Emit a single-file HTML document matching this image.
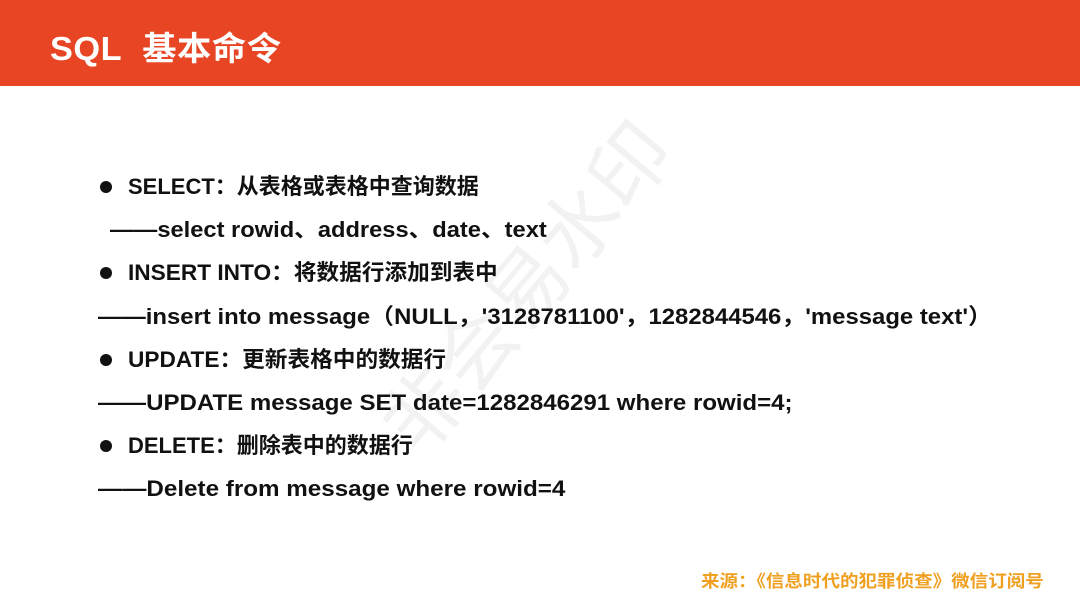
<!DOCTYPE html>
<html><head><meta charset="utf-8"><style>
body{margin:0;width:1080px;height:608px;background:#fff;position:relative;overflow:hidden;font-family:"Liberation Sans","Noto Sans CJK SC",sans-serif}
.hd{position:absolute;left:0;top:0;width:1080px;height:86px;background:#e84524}
.hd span{position:absolute;left:50px;top:22px;color:#fff;font-size:33px;font-weight:bold;letter-spacing:0.5px;transform:scaleX(1.04);transform-origin:left}
.l{position:absolute;font-size:22px;font-weight:bold;color:#111;white-space:nowrap;line-height:30px;transform-origin:left center}
.b{position:absolute;left:100px;width:12px;height:12px;border-radius:50%;background:#111}
.src{position:absolute;left:701px;top:567px;color:#f0a020;font-size:17px;font-weight:bold;white-space:nowrap;transform:scaleX(1.09);transform-origin:left}
.wm{position:absolute;left:350px;top:400px;font-size:80px;color:rgba(0,0,0,0.05);transform:rotate(-50deg);transform-origin:left top;white-space:nowrap}
</style></head><body>
<div class="hd"><span>SQL&nbsp; 基本命令</span></div>
<div class="wm">非会易水印</div>
<div class="b" style="top:181px"></div><div class="l" style="left:128px;top:172px">SELECT：从表格或表格中查询数据</div>
<div class="l" style="left:110px;top:215px;transform:scaleX(1.076)">——select rowid、address、date、text</div>
<div class="b" style="top:267px"></div><div class="l" style="left:128px;top:258px;transform:scaleX(1.03)">INSERT INTO：将数据行添加到表中</div>
<div class="l" style="left:98px;top:302px;transform:scaleX(1.086)">——insert into message（NULL，'3128781100'，1282844546，'message text'）</div>
<div class="b" style="top:354px"></div><div class="l" style="left:128px;top:345px;transform:scaleX(1.03)">UPDATE：更新表格中的数据行</div>
<div class="l" style="left:98px;top:388px;transform:scaleX(1.093)">——UPDATE message SET date=1282846291 where rowid=4;</div>
<div class="b" style="top:440px"></div><div class="l" style="left:128px;top:431px">DELETE：删除表中的数据行</div>
<div class="l" style="left:98px;top:474px;transform:scaleX(1.1)">——Delete from message where rowid=4</div>
<div class="src">来源：《信息时代的犯罪侦查》微信订阅号</div>
</body></html>
